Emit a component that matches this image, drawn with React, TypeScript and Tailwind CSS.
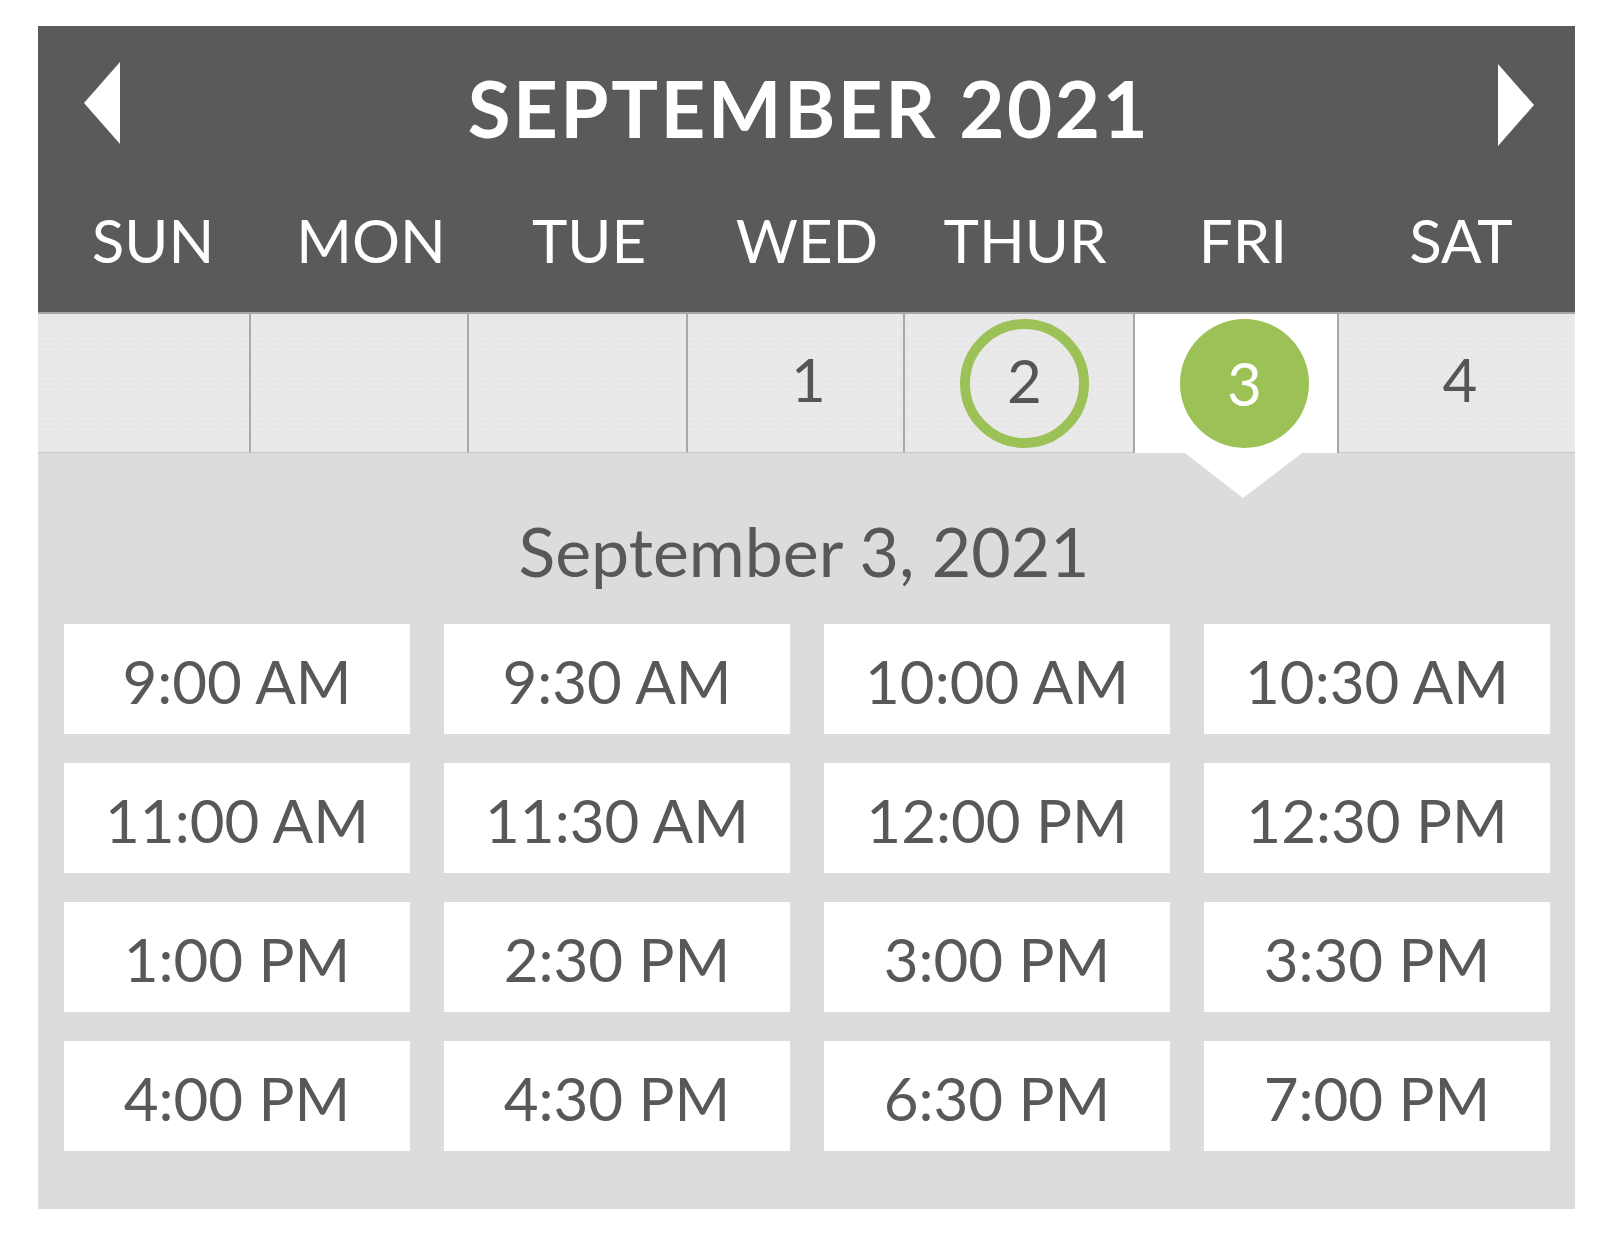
import React from 'react';

const DAYS = ['SUN', 'MON', 'TUE', 'WED', 'THUR', 'FRI', 'SAT'];

const TIMES = [
  '9:00 AM', '9:30 AM', '10:00 AM', '10:30 AM',
  '11:00 AM', '11:30 AM', '12:00 PM', '12:30 PM',
  '1:00 PM', '2:30 PM', '3:00 PM', '3:30 PM',
  '4:00 PM', '4:30 PM', '6:30 PM', '7:00 PM',
];

const dotted =
  'bg-[#e9e9e9] bg-[image:radial-gradient(circle,#dcdcdc_0.7px,transparent_1px)] bg-[length:5px_5px]';

export default function App() {
  return (
    <div className="min-h-screen bg-white pt-[26px] pl-[38px] font-['Lato','Noto_Sans',sans-serif]">
      <div className="w-[1537px] h-[1183px] flex flex-col bg-[#dcdcdc]">
        {/* Header */}
        <div className="bg-[#5a5a5a] h-[286px] pt-[36px] flex flex-col">
          <div className="flex items-start justify-between pl-[46px] pr-[41px] h-[85px]">
            <button className="w-[36px] h-[82px]" aria-label="Previous month">
              <svg viewBox="0 0 36 82" className="w-[36px] h-[82px]">
                <polygon points="36,0 36,82 0,41" fill="#ffffff" />
              </svg>
            </button>
            <h1 className="mt-[7px] text-[78px] leading-none font-bold text-white tracking-[2.5px]">
              SEPTEMBER 2021
            </h1>
            <button className="mt-[2px] w-[36px] h-[82px]" aria-label="Next month">
              <svg viewBox="0 0 36 82" className="w-[36px] h-[82px]">
                <polygon points="0,0 0,82 36,41" fill="#ffffff" />
              </svg>
            </button>
          </div>
          <div className="mt-[63px] grid grid-cols-[repeat(7,218px)] pl-[6px]">
            {DAYS.map((d) => (
              <div key={d} className="text-center text-white text-[60px] leading-none">
                {d}
              </div>
            ))}
          </div>
        </div>

        {/* Date row */}
        <div className="h-[141px] grid grid-cols-[213px_218px_219px_217px_230px_204px_236px] border-t-2 border-[#a6a6a6] text-[60px] leading-none text-[#555555]">
          <div className={`${dotted} border-r-2 border-[#a8a8a8] border-b border-b-[#c6c6c6]`} />
          <div className={`${dotted} border-r-2 border-[#a8a8a8] border-b border-b-[#c6c6c6]`} />
          <div className={`${dotted} border-r-2 border-[#a8a8a8] border-b border-b-[#c6c6c6]`} />
          <div className={`${dotted} border-r-2 border-[#a8a8a8] border-b border-b-[#c6c6c6] flex items-center justify-center pl-[26px] pb-[8px]`}>
            1
          </div>
          <div className={`${dotted} border-r-2 border-[#a8a8a8] border-b border-b-[#c6c6c6] flex items-center justify-center pl-[11px]`}>
            <div className="w-[129px] h-[129px] rounded-full border-[10px] border-[#9cc257] flex items-center justify-center pb-[6px]">
              2
            </div>
          </div>
          <div className="relative bg-white border-r-2 border-[#a8a8a8] flex items-center justify-center pl-[17px]">
            <div className="w-[129px] h-[129px] rounded-full bg-[#9cc257] text-white flex items-center justify-center pb-[2px]">
              3
            </div>
            <svg
              viewBox="0 0 117 45"
              className="absolute top-full left-[50px] w-[117px] h-[45px] z-10"
            >
              <polygon points="0,0 117,0 58,45" fill="#ffffff" />
            </svg>
          </div>
          <div className={`${dotted} border-b border-b-[#c6c6c6] flex items-center justify-center pl-[6px] pb-[8px]`}>
            4
          </div>
        </div>

        {/* Body */}
        <div className="flex-1 flex flex-col pt-[64px] pl-[26px] pr-[25px]">
          <h2 className="text-center text-[68px] leading-none text-[#585858] pr-[6px]">
            September 3, 2021
          </h2>
          <div className="mt-[39px] grid grid-cols-4 gap-x-[34px] gap-y-[29px]">
            {TIMES.map((t) => (
              <button
                key={t}
                className="h-[110px] bg-white flex items-center justify-center pt-[4px] text-[60px] leading-none text-[#585858]"
              >
                {t}
              </button>
            ))}
          </div>
        </div>
      </div>
    </div>
  );
}
